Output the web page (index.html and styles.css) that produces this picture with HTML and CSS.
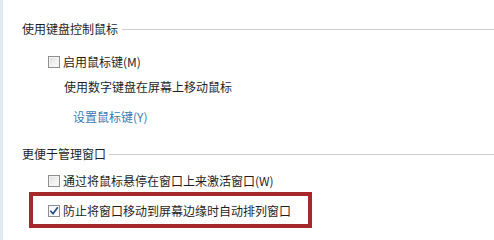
FILE: index.html
```html
<!DOCTYPE html>
<html lang="zh-CN">
<head>
<meta charset="utf-8">
<link rel="stylesheet" href="styles.css">
</head>
<body>
<div class="page">
  <div class="group-title title-1"><span>使用键盘控制鼠标</span><i class="rule"></i></div>
  <label class="option opt-1"><span class="cb"></span><span>启用鼠标键(M)</span></label>
  <div class="desc">使用数字键盘在屏幕上移动鼠标</div>
  <a class="link">设置鼠标键(Y)</a>

  <div class="group-title title-2"><span>更便于管理窗口</span><i class="rule"></i></div>
  <label class="option opt-2"><span class="cb"></span><span>通过将鼠标悬停在窗口上来激活窗口(W)</span></label>
  <div class="highlight">
    <label class="option"><span class="cb checked"><svg viewBox="0 0 10 10" width="10" height="10"><path d="M1.8 5.2 L4 7.8 L8.4 1.8" fill="none" stroke="#2d4f86" stroke-width="1.7" stroke-linejoin="round" stroke-linecap="round"/></svg></span><span>防止将窗口移动到屏幕边缘时自动排列窗口</span></label>
  </div>
</div>
</body>
</html>
```

FILE: styles.css
```css
html, body {
  margin: 0;
  padding: 0;
  background: #ffffff;
}
body {
  width: 494px;
  height: 240px;
  overflow: hidden;
  font-family: "Noto Sans CJK SC", "Noto Sans", sans-serif;
  font-size: 12px;
  color: #1f1f1f;
}
.page {
  border-left: 3px solid #dfeaf5;
  height: 240px;
  box-sizing: border-box;
  padding-top: 19px;
  padding-left: 19px;
}
.group-title {
  display: flex;
  align-items: center;
  height: 20px;
  line-height: 20px;
  gap: 4px;
}
.group-title .rule {
  flex: 1;
  height: 1px;
  background: #cdcdcd;
  margin-top: 1px;
}
.title-2 { margin-top: 17px; gap: 3px; }
.option {
  display: flex;
  align-items: center;
  height: 20px;
  line-height: 20px;
  gap: 3px;
  margin-left: 26px;
}
.opt-1 { margin-top: 13px; }
.opt-2 { margin-top: 7px; }
.cb {
  width: 10px;
  height: 10px;
  border: 1px solid #8e8f8f;
  background: linear-gradient(135deg, #dcdcdc 0%, #f2f2f2 60%, #fbfbfb 100%);
  box-shadow: inset 0 0 0 1px #f4f4f4;
  display: flex;
  align-items: center;
  justify-content: center;
}
.cb.checked {
  background: #f7f9fc;
  box-shadow: none;
}
.desc {
  margin-top: 5px;
  margin-left: 42px;
  height: 20px;
  line-height: 20px;
}
.link {
  display: block;
  margin-top: 10px;
  margin-left: 51px;
  height: 20px;
  line-height: 20px;
  color: #3a7ab6;
}
.highlight {
  margin-top: 1px;
  margin-left: 7px;
  width: 283px;
  height: 36px;
  box-sizing: border-box;
  border: 4px solid #a5282b;
  padding: 5px 0 3px 15px;
}
.highlight .option { margin-left: 0; }
```
